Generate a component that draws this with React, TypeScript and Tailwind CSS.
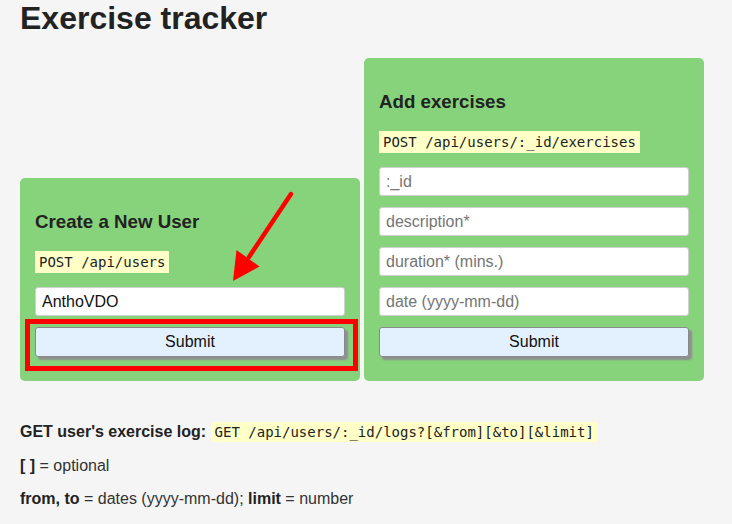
import React from "react";

function Field({ placeholder, value }: { placeholder?: string; value?: string }) {
  return (
    <input
      className="block h-[29px] w-[310px] rounded-[3px] border border-[#cfcfcf] bg-white px-[6px] text-[16px] text-[#111] outline-none placeholder:text-[#757575]"
      placeholder={placeholder}
      defaultValue={value}
    />
  );
}

function SubmitButton() {
  return (
    <button className="block h-[30px] w-[310px] rounded-[3px] border border-[#8a8a8a] bg-[#e3f0fd] text-[16px] text-[#111] shadow-[3px_3px_2px_#8f8f8f]">
      Submit
    </button>
  );
}

function Code({ children }: { children: React.ReactNode }) {
  return (
    <div className="w-fit bg-[#ffffc8] px-[4px] font-['DejaVu_Sans_Mono',monospace] text-[14px] leading-[22px] text-[#222]">
      {children}
    </div>
  );
}

function Card({ title, code, children }: { title: string; code: string; children: React.ReactNode }) {
  return (
    <div className="flex w-[340px] flex-col rounded-[5px] bg-[#87d37c] px-[15px] pt-[33px] pb-[24px]">
      <h3 className="text-[18.72px] font-bold leading-[22px] text-[#222]">{title}</h3>
      <div className="mt-[18px]">
        <Code>{code}</Code>
      </div>
      <div className="mt-[14px] flex flex-col gap-[11px]">{children}</div>
    </div>
  );
}

export default function App() {
  return (
    <div className="relative min-h-[524px] overflow-hidden bg-[#f5f5f5] px-[20px] font-['Liberation_Sans',Arial,sans-serif] text-[#222]">
      <h1 className="text-[32px] font-bold leading-[37px] text-[#222]">Exercise tracker</h1>
      <div className="mt-[21px] flex items-end gap-[4px]">
        <Card title="Create a New User" code="POST /api/users">
          <Field value="AnthoVDO" />
          <SubmitButton />
        </Card>
        <Card title="Add exercises" code="POST /api/users/:_id/exercises">
          <Field placeholder=":_id" />
          <Field placeholder="description*" />
          <Field placeholder="duration* (mins.)" />
          <Field placeholder="date (yyyy-mm-dd)" />
          <SubmitButton />
        </Card>
      </div>
      <p className="mt-[41px] text-[16px] leading-[20px]">
        <b>GET user's exercise log:</b>{" "}
        <span className="bg-[#ffffc8] px-[4px] py-[2px] font-['DejaVu_Sans_Mono',monospace] text-[14px]">
          GET /api/users/:_id/logs?[&amp;from][&amp;to][&amp;limit]
        </span>
      </p>
      <p className="mt-[14px] text-[16px] leading-[20px] text-[#333]">
        <b className="text-[#222]">[ ]</b> = optional
      </p>
      <p className="mt-[13px] text-[16px] leading-[20px] text-[#333]">
        <b className="text-[#222]">from, to</b> = dates (yyyy-mm-dd); <b className="text-[#222]">limit</b> = number
      </p>

      <div className="pointer-events-none absolute left-[25px] top-[319px] h-[52px] w-[333px] border-[5px] border-[#ff0000]" />
      <svg
        className="pointer-events-none absolute left-0 top-0"
        width="732"
        height="524"
        viewBox="0 0 732 524"
      >
        <line x1="291" y1="194" x2="249" y2="257" stroke="#ff0000" strokeWidth="4.5" strokeLinecap="round" />
        <polygon points="233,281 236.5,250 259.5,266.5" fill="#ff0000" />
      </svg>
    </div>
  );
}
